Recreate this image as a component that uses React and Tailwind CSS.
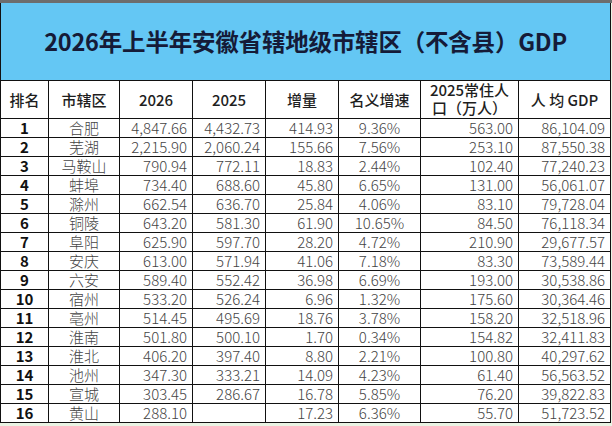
// 2026年上半年安徽省辖地级市辖区 GDP 表
const ROWS = [
  [1, "合肥", "4,847.66", "4,432.73", "414.93", "9.36%", "563.00", "86,104.09"],
  [2, "芜湖", "2,215.90", "2,060.24", "155.66", "7.56%", "253.10", "87,550.38"],
  [3, "马鞍山", "790.94", "772.11", "18.83", "2.44%", "102.40", "77,240.23"],
  [4, "蚌埠", "734.40", "688.60", "45.80", "6.65%", "131.00", "56,061.07"],
  [5, "滁州", "662.54", "636.70", "25.84", "4.06%", "83.10", "79,728.04"],
  [6, "铜陵", "643.20", "581.30", "61.90", "10.65%", "84.50", "76,118.34"],
  [7, "阜阳", "625.90", "597.70", "28.20", "4.72%", "210.90", "29,677.57"],
  [8, "安庆", "613.00", "571.94", "41.06", "7.18%", "83.30", "73,589.44"],
  [9, "六安", "589.40", "552.42", "36.98", "6.69%", "193.00", "30,538.86"],
  [10, "宿州", "533.20", "526.24", "6.96", "1.32%", "175.60", "30,364.46"],
  [11, "亳州", "514.45", "495.69", "18.76", "3.78%", "158.20", "32,518.96"],
  [12, "淮南", "501.80", "500.10", "1.70", "0.34%", "154.82", "32,411.83"],
  [13, "淮北", "406.20", "397.40", "8.80", "2.21%", "100.80", "40,297.62"],
  [14, "池州", "347.30", "333.21", "14.09", "4.23%", "61.40", "56,563.52"],
  [15, "宣城", "303.45", "286.67", "16.78", "5.85%", "76.20", "39,822.83"],
  [16, "黄山", "288.10", "", "17.23", "6.36%", "55.70", "51,723.52"],
];

const WIDTHS = ["w-[48px]", "w-[71px]", "w-[73px]", "w-[73px]", "w-[73px]", "w-[82px]", "w-[98px]", "w-[92px]"];

export default function App() {
  const cell = "border border-[#111] px-[5px] p-0";
  return (
    <div
      className="w-[612px] h-[426px] overflow-hidden bg-[#eaf4e4]"
      style={{ fontFamily: '"Noto Sans CJK SC", "Noto Sans", sans-serif' }}
    >
      <div className="h-[3px] bg-[#6d6d6d]" />
      <table className="w-[610px] table-fixed border-collapse bg-white">
        <colgroup>
          {WIDTHS.map((w, i) => <col key={i} className={w} />)}
        </colgroup>
        <thead>
          <tr className="h-[77px] bg-[#64c7f4]">
            <th colSpan={8} className="border border-[#111] border-t-0 text-center text-[23.5px] font-bold text-[#151b38] tracking-[-0.2px]">
              2026年上半年安徽省辖地级市辖区（不含县）GDP
            </th>
          </tr>
          <tr className="h-[38px] text-[15px] text-[#1e1e1e] leading-[17px]">
            <th className={`${cell} font-medium`}>排名</th>
            <th className={`${cell} font-medium`}>市辖区</th>
            <th className={`${cell} font-medium`}>2026</th>
            <th className={`${cell} font-medium`}>2025</th>
            <th className={`${cell} font-medium`}>增量</th>
            <th className={`${cell} font-medium`}>名义增速</th>
            <th className={`${cell} font-medium`}>
              <div className="leading-[18px]">2025常住人</div>
              <div className="leading-[18px]">口（万人）</div>
            </th>
            <th className={`${cell} font-medium`}>人 均 GDP</th>
          </tr>
        </thead>
        <tbody className="text-[15px] leading-[17px] text-[#444] font-light">
          {ROWS.map((r) => (
            <tr key={r[0]} className="h-[19px]">
              <td className={`${cell} text-center font-semibold text-[#111]`}>{r[0]}</td>
              <td className={`${cell} text-center`}>{r[1]}</td>
              <td className={`${cell} text-right`}>{r[2]}</td>
              <td className={`${cell} text-right`}>{r[3]}</td>
              <td className={`${cell} text-right`}>{r[4]}</td>
              <td className={`${cell} text-center`}>{r[5]}</td>
              <td className={`${cell} text-right`}>{r[6]}</td>
              <td className={`${cell} text-right`}>{r[7]}</td>
            </tr>
          ))}
        </tbody>
      </table>
    </div>
  );
}
